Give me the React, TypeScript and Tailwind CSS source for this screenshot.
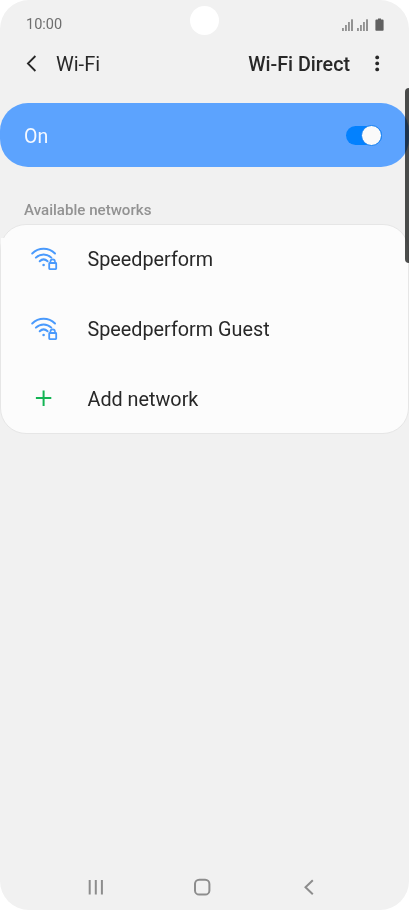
import { ReactNode } from "react";

const SignalIcon = () => (
  <svg width="12" height="12" viewBox="0 0 12 12" fill="#7b7b7b">
    <rect x="0.2" y="9" width="1.5" height="3" />
    <rect x="3.2" y="6" width="1.5" height="6" />
    <rect x="6.2" y="3" width="1.5" height="9" />
    <rect x="9.2" y="0.3" width="1.6" height="11.7" />
  </svg>
);

const BatteryIcon = () => (
  <svg width="9" height="13" viewBox="0 0 9 13" fill="#606060">
    <path d="M3 0.4h3v1.2h1.6a1 1 0 0 1 1 1V12a0.8 0.8 0 0 1-0.8 0.8H1.2A0.8 0.8 0 0 1 .4 12V2.6a1 1 0 0 1 1-1H3z" />
  </svg>
);

const WifiLockIcon = () => (
  <svg
    width="28"
    height="26"
    viewBox="0 0 28 26"
    fill="none"
    stroke="#4a9afc"
    strokeWidth="2"
    strokeLinecap="round"
  >
    <path d="M2.2 7.5C8.7 1.2 18.5 1.2 25 7.5" />
    <path d="M5.9 11.6C10.2 7.3 17 7.3 21.3 11.6" />
    <path d="M9.7 15.2C12 13 15.2 13 17.6 15.2" />
    <circle cx="13.6" cy="19" r="1.3" fill="#4a9afc" stroke="none" />
    <rect x="19.2" y="17" width="7" height="6.1" rx="0.5" strokeWidth="1.8" />
    <path d="M20.4 17V15.7a2.3 2.3 0 0 1 4.6 0V17" strokeWidth="1.6" />
  </svg>
);

const PlusIcon = () => (
  <svg width="28" height="26" viewBox="0 0 28 26" stroke="#13b454" strokeWidth="2">
    <path d="M5.9 12.1h15.4M13.6 4.5v15.4" />
  </svg>
);

const Row = ({ icon, label }: { icon: ReactNode; label: string }) => (
  <div className="flex h-[70px] items-center pl-[29px]">
    {icon}
    <span className="ml-[29.5px] pt-[2px] text-[19.8px] leading-[24px] text-[#282828]">{label}</span>
  </div>
);

const StatusBar = () => (
  <div className="flex h-12 items-center justify-between pt-[2px] pr-[25px] pl-[26px]">
    <span className="text-[14.5px] text-[#6e6e6e]">10:00</span>
    <div className="flex items-center">
      <SignalIcon />
      <span className="ml-[3px] flex">
        <SignalIcon />
      </span>
      <span className="mb-[2px] ml-[6px] flex">
        <BatteryIcon />
      </span>
    </div>
  </div>
);

const Header = () => (
  <div className="flex h-8 items-center pl-[26px] text-[20px] text-[#282828]">
    <svg
      className="mb-[2px]"
      width="11"
      height="17"
      viewBox="0 0 11 17"
      fill="none"
      stroke="#282828"
      strokeWidth="1.8"
    >
      <path d="M9.4 1L1.9 8.5l7.5 7.5" />
    </svg>
    <span className="ml-[19px]">Wi-Fi</span>
    <span className="mr-[25px] ml-auto pt-px text-[19.7px] font-medium">Wi-Fi Direct</span>
    <svg className="mr-[29px] mb-[2px]" width="5" height="17" viewBox="0 0 5 17" fill="#282828">
      <circle cx="2.2" cy="2.4" r="1.9" />
      <circle cx="2.2" cy="8.4" r="1.9" />
      <circle cx="2.2" cy="14.4" r="1.9" />
    </svg>
  </div>
);

const NavBar = () => (
  <svg
    className="mt-auto"
    width="409"
    height="46"
    viewBox="0 0 409 46"
    fill="none"
    stroke="#8d8d8d"
    strokeWidth="2"
  >
    <path d="M89.7 16v14.5M95.8 16v14.5M101.9 16v14.5" />
    <rect x="195" y="15.8" width="14.4" height="14.8" rx="4.2" />
    <path d="M312.8 16.2l-7.3 7 7.3 7" />
  </svg>
);

export default function App() {
  return (
    <div className="h-[910px] w-[409px] bg-white font-['Roboto',sans-serif]">
      <div className="relative flex h-full flex-col overflow-hidden rounded-[29px] bg-[#f1f1f1]">
        <StatusBar />
        <Header />

        <div className="mt-[23px] flex h-16 items-center justify-between rounded-[28px] bg-[#5ca3fe] pr-[27px] pl-6">
          <span className="pt-[3px] text-[19.5px] text-[#f6f9ff]">On</span>
          <div className="flex h-[19px] w-9 items-center justify-end rounded-full bg-[#0381fe]">
            <div className="h-[21px] w-[21px] shrink-0 rounded-full border border-[#1680f0] bg-[#fafafa]" />
          </div>
        </div>

        <div className="mt-[33px] pl-6 text-[15.1px] leading-5 font-medium text-[#929292]">
          Available networks
        </div>

        <div className="relative mt-[4px] h-[210px] rounded-[26px] border border-[#e6e6e6] bg-[#fcfcfc]">
          <span className="absolute top-[13px] left-0 h-3 w-2 bg-[#fcfcfc]" />
          <div className="-mt-px">
            <Row icon={<WifiLockIcon />} label="Speedperform" />
            <Row icon={<WifiLockIcon />} label="Speedperform Guest" />
            <Row icon={<PlusIcon />} label="Add network" />
          </div>
        </div>

        <NavBar />

        {/* camera hole */}
        <span className="absolute top-[6px] left-[190px] h-[29px] w-[29px] rounded-full bg-white" />
        {/* side key */}
        <span className="absolute top-[88px] right-0 h-[175px] w-1 rounded-l-[4px] bg-[#4d4f4e] mix-blend-multiply" />
      </div>
    </div>
  );
}
